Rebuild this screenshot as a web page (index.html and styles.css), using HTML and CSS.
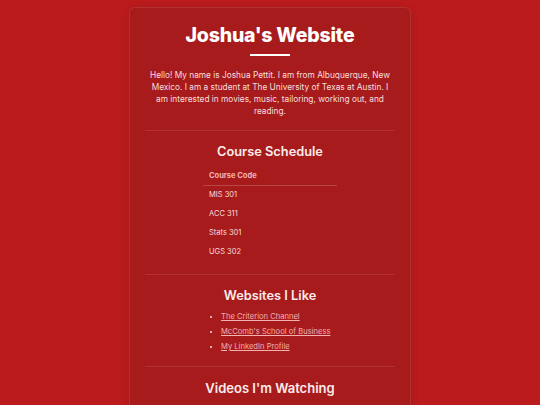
FILE: index.html
```html
<!DOCTYPE html>
<html>
<head>
<meta charset="utf-8">
<link rel="stylesheet" href="styles.css">
</head>
<body>
<main class="card">
  <header class="hero">
    <h1 class="title">Joshua's Website</h1>
    <div class="bar"></div>
    <p class="intro">Hello! My name is Joshua Pettit. I am from Albuquerque, New Mexico. I am a student at The University of Texas at Austin. I am interested in movies, music, tailoring, working out, and reading.</p>
  </header>
  <section class="section">
    <h2 class="heading">Course Schedule</h2>
    <table class="courses">
      <thead><tr><th>Course Code</th></tr></thead>
      <tbody>
        <tr><td>MIS 301</td></tr>
        <tr><td>ACC 311</td></tr>
        <tr><td>Stats 301</td></tr>
        <tr><td>UGS 302</td></tr>
      </tbody>
    </table>
  </section>
  <section class="section">
    <h2 class="heading">Websites I Like</h2>
    <ul class="links">
      <li><a href="#">The Criterion Channel</a></li>
      <li><a href="#">McComb's School of Business</a></li>
      <li><a href="#">My LinkedIn Profile</a></li>
    </ul>
  </section>
  <section class="section">
    <h2 class="heading big">Videos I'm Watching</h2>
  </section>
</main>
</body>
</html>
```
FILE: styles.css
```css
html, body { margin: 0; padding: 0; }
body {
  background: #bb1b1d;
  font-family: Inter, "Noto Sans", sans-serif;
  color: #fbeaea;
  height: 405px;
  overflow: hidden;
}
.card {
  width: 250px;
  margin: 7px auto 0;
  background: #a81b1c;
  border: 1px solid rgba(255,255,255,0.1);
  border-radius: 6px;
  padding: 0 15px 20px;
  box-shadow: 0 2px 10px rgba(0,0,0,0.12);
}
.hero { text-align: center; padding-top: 13px; padding-bottom: 13px; border-bottom: 1px solid rgba(255,255,255,0.1); }
.title { margin: 0; font-size: 19.5px; font-weight: 800; color: #fff; line-height: 28px; letter-spacing: -0.2px; }
.bar { width: 40px; height: 2px; background: #fff; margin: 5px auto 13px; }
.intro { margin: 0; font-size: 8.3px; line-height: 12px; color: #f7dede; }
.section { text-align: center; padding: 12px 0 12px; border-bottom: 1px solid rgba(255,255,255,0.1); }
.section:last-child { border-bottom: none; }
.heading { margin: 0 0 5px; font-size: 12.8px; font-weight: 600; color: #fbecec; line-height: 18px; }
.heading.big { font-size: 13px; }
.courses { margin: 0 auto; width: 134px; border-collapse: collapse; text-align: left; font-size: 7.5px; }
.courses th { font-weight: 700; color: #f3b3b3; padding: 5px 6px 5px; border-bottom: 1px solid rgba(255,255,255,0.1); }
.courses td { padding: 5px 6px 6px; color: #f7dede; line-height: 8px; }
.links { margin: -1px 0 0; padding: 0 0 0 76px; text-align: left; font-size: 7.6px; line-height: 15px; list-style: disc; color: #f7dede; }
.links a { color: #f3b0b0; }
```
